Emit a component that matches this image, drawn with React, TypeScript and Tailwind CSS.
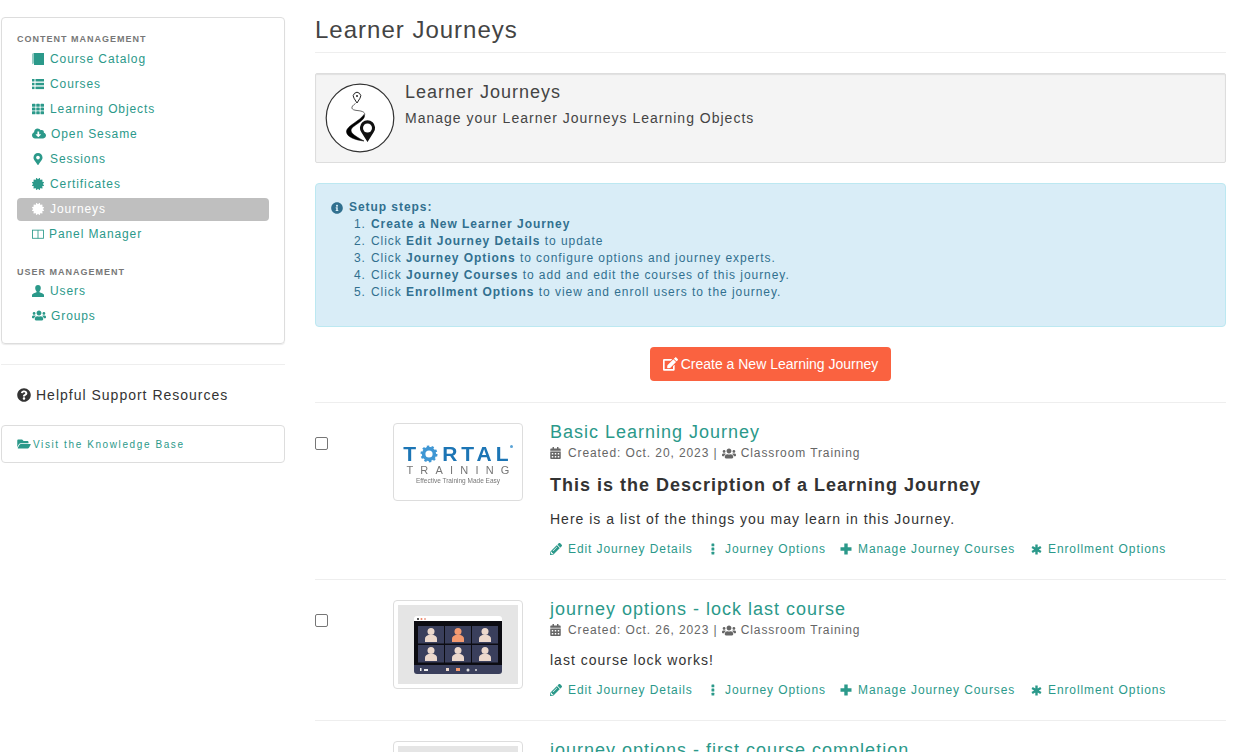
import React from "react";
import {
  FaTh, FaCloudDownloadAlt, FaMapMarkerAlt, FaCertificate, FaUsers,
  FaQuestionCircle, FaFolderOpen, FaInfoCircle, FaPencilAlt, FaEdit,
  FaCalendarAlt,
} from "react-icons/fa";

const Panel = ({ className = "" }: { className?: string }) => (
  <svg viewBox="0 0 14 12" className={className} fill="none" stroke="currentColor" strokeWidth="1">
    <rect x="0.5" y="1.5" width="13" height="9.5" />
    <path d="M7 1.5V11" />
  </svg>
);

const BookIcon = ({ className = "" }: { className?: string }) => (
  <svg viewBox="0 0 12 12" className={className} fill="currentColor">
    <path d="M2 0H12V12H2z" />
    <path d="M0.500 1.500C0.500 .5 1 0 1.500 0v10.500c-.5 0-1 .5-1 1.500z" />
  </svg>
);

const ListIcon = ({ className = "" }: { className?: string }) => (
  <svg viewBox="0 0 12 12" className={className} fill="currentColor">
    <rect x="0" y="1" width="2.500" height="2.500" />
    <rect x="3.500" y="1" width="8.500" height="2.500" />
    <rect x="0" y="4.800" width="2.500" height="2.500" />
    <rect x="3.500" y="4.800" width="8.500" height="2.500" />
    <rect x="0" y="8.600" width="2.500" height="2.500" />
    <rect x="3.500" y="8.600" width="8.500" height="2.500" />
  </svg>
);

const UserIcon = ({ className = "" }: { className?: string }) => (
  <svg viewBox="0 0 12 12" className={className} fill="currentColor">
    <path d="M6 0c1.800 0 2.800 1.200 2.800 3 0 1.500-.7 2.600-1.300 3.200v1c1.500.6 4 1.200 4.500 2.600V12H0V9.800c.5-1.400 3-2 4.500-2.600v-1C3.900 5.600 3.200 4.500 3.200 3 3.200 1.200 4.200 0 6 0z" />
  </svg>
);

const PlusIcon = ({ className = "" }: { className?: string }) => (
  <svg viewBox="0 0 12 12" className={className} fill="currentColor">
    <path d="M4.300.5h3.400v3.800h3.800v3.400H7.700v3.800H4.300V7.700H.5V4.300h3.800z" />
  </svg>
);

const StarIcon = ({ className = "" }: { className?: string }) => (
  <svg viewBox="0 0 12 12" className={className} fill="none" stroke="currentColor" strokeWidth="2.600">
    <path d="M6 .5v11M1.200 3.200l9.600 5.600M10.800 3.200L1.200 8.800" />
  </svg>
);

const DotsIcon = ({ className = "" }: { className?: string }) => (
  <svg viewBox="0 0 12 12" className={className} fill="currentColor">
    <rect x="4.500" y="0.500" width="2.800" height="2.800" rx="0.500" />
    <rect x="4.500" y="4.600" width="2.800" height="2.800" rx="0.500" />
    <rect x="4.500" y="8.700" width="2.800" height="2.800" rx="0.500" />
  </svg>
);

type Item = { icon: React.ReactNode; label: string; gap: string; active?: boolean };

const nav1: Item[] = [
  { icon: <BookIcon className="w-[12px] h-[12px]" />, label: "Course Catalog", gap: "w-[18px]" },
  { icon: <ListIcon className="w-[12px] h-[12px]" />, label: "Courses", gap: "w-[18px]" },
  { icon: <FaTh className="w-[12px] h-[12px]" />, label: "Learning Objects", gap: "w-[18px]" },
  { icon: <FaCloudDownloadAlt className="w-[14px] h-[13px]" />, label: "Open Sesame", gap: "w-[19px]" },
  { icon: <FaMapMarkerAlt className="w-[12px] h-[12px]" />, label: "Sessions", gap: "w-[18px]" },
  { icon: <FaCertificate className="w-[12px] h-[12px]" />, label: "Certificates", gap: "w-[18px]" },
  { icon: <FaCertificate className="w-[12px] h-[12px]" />, label: "Journeys", gap: "w-[18px]", active: true },
  { icon: <Panel className="w-[12px] h-[12px]" />, label: "Panel Manager", gap: "w-[17px]" },
];
const nav2: Item[] = [
  { icon: <UserIcon className="w-[12px] h-[12px]" />, label: "Users", gap: "w-[18px]" },
  { icon: <FaUsers className="w-[14px] h-[13px]" />, label: "Groups", gap: "w-[19px]" },
];

const NavItem = ({ item }: { item: Item }) => (
  <div
    className={`mr-[15px] h-[23px] mb-[2px] pb-[2px] flex items-center pl-[15px] rounded-[4px] text-[12px] tracking-[0.9px] ${
      item.active ? "bg-[#bfbfbf] text-white" : "text-[#2b998a]"
    }`}
  >
    <span className={`${item.gap} shrink-0 flex items-center`}>{item.icon}</span>
    {item.label}
  </div>
);

const Actions = ({ mt }: { mt: string }) => (
  <div className={`flex items-center h-[18px] ${mt} text-[12px] tracking-[0.9px] text-[#2b998a]`}>
    <span className="flex items-center w-[157px]">
      <FaPencilAlt className="w-[12px] h-[12px] mr-[6px]" />
      Edit Journey Details
    </span>
    <span className="flex items-center w-[133px]">
      <DotsIcon className="w-[12px] h-[12px] mr-[6px]" />
      Journey Options
    </span>
    <span className="flex items-center w-[191px]">
      <PlusIcon className="w-[12px] h-[12px] mr-[6px]" />
      Manage Journey Courses
    </span>
    <span className="flex items-center">
      <StarIcon className="w-[11px] h-[11px] mr-[6px]" />
      Enrollment Options
    </span>
  </div>
);

const Meta = ({ date }: { date: string }) => (
  <div className="flex items-center h-[18px] mt-[2px] text-[12px] tracking-[0.9px] text-[#666]">
    <FaCalendarAlt className="w-[11px] h-[12px] mr-[7px]" />
    Created: {date} |&nbsp;
    <FaUsers className="w-[14px] h-[13px] mr-[5px]" />
    Classroom Training
  </div>
);

const Person = ({ x, y, c }: { x: number; y: number; c: string }) => (
  <g transform={`translate(${x} ${y})`}>
    <circle cx="9" cy="3.500" r="3.500" fill={c} />
    <path d="M3 14v-3.500c0-2 2-3 3.500-3.500h5c1.500.5 3.500 1.500 3.500 3.500V14z" fill={c} />
  </g>
);

const Tortal = () => (
  <div className="w-full h-full flex flex-col items-center pt-[18px] blur-[0.3px]">
    <div className="relative flex items-center h-[15px] text-[21px] leading-none font-bold tracking-[4px] text-[#1c75b5]">
      <span>T</span>
      <svg viewBox="0 0 20 20" className="w-[18px] h-[18px] mr-[4px]">
        <circle cx="10" cy="10" r="6" fill="none" stroke="#3f97d4" strokeWidth="4" />
        <circle cx="10" cy="10" r="8.200" fill="none" stroke="#3f97d4" strokeWidth="2.500" strokeDasharray="2.600 2.550" />
      </svg>
      <span>RTAL</span>
      <span className="absolute right-[0px] top-[-1px] w-[3px] h-[3px] rounded-full bg-[#5aa3d6]" />
    </div>
    <div className="text-[11px] leading-[12px] mt-[3px] tracking-[7.200px] text-[#777] pl-[7px]">TRAINING</div>
    <div className="text-[6.500px] leading-[8px] mt-[1px] text-[#777] whitespace-nowrap">Effective Training Made Easy</div>
  </div>
);

const Meeting = () => (
  <div className="w-full h-full bg-[#e5e5e5] flex items-center justify-center blur-[0.3px]">
    <svg viewBox="0 0 88 58" className="w-[88px] h-[58px]">
      <path d="M3 0h82a3 3 0 0 1 3 3v3H0V3a3 3 0 0 1 3-3z" fill="#fff" />
      <circle cx="4" cy="3" r="1" fill="#222" />
      <circle cx="7.500" cy="3" r="1" fill="#f08060" />
      <circle cx="11" cy="3" r="1" fill="#e8a090" />
      <rect y="5" width="88" height="45" fill="#0c0c12" />
      {[4, 31, 58].map((x) =>
        [10, 29].map((y) => <rect key={`${x}-${y}`} x={x} y={y} width="26" height="17.500" fill="#3a3f5c" />),
      )}
      <Person x={8} y={12} c="#ecd8cc" />
      <Person x={35} y={12} c="#f49a70" />
      <Person x={62} y={12} c="#ecd8cc" />
      <Person x={8} y={31} c="#ecd8cc" />
      <Person x={35} y={31} c="#ecd8cc" />
      <Person x={62} y={31} c="#ecd8cc" />
      <path d="M0 49h88v6a3 3 0 0 1-3 3H3a3 3 0 0 1-3-3z" fill="#3a3f5c" />
      <rect x="6" y="52" width="1.500" height="3" fill="#eee" />
      <rect x="10" y="53" width="4" height="2" fill="#eee" />
      <rect x="32" y="52" width="3" height="3" fill="#ecd8cc" />
      <rect x="42" y="52" width="4" height="3" fill="#f49a70" />
      <circle cx="54" cy="54" r="1.500" fill="#ddd" />
      <circle cx="62" cy="54" r="1" fill="#ddd" />
    </svg>
  </div>
);

const JourneyIcon = () => (
  <svg viewBox="0 0 70 70" className="w-[70px] h-[70px] shrink-0">
    <circle cx="35" cy="35" r="33.800" fill="#fff" stroke="#333" strokeWidth="1.200" />
    <path d="M32 20l-3-4.800a3.700 3.700 0 1 1 6 0z" fill="#fff" stroke="#222" strokeWidth="1" />
    <circle cx="32" cy="13" r="1" fill="#222" />
    <path d="M30.500 20.500C25 24 26 27 32 27.500c6 .5 8.500 2 7.500 5" fill="none" stroke="#444" strokeWidth="0.800" />
    <path d="M39 31.500C42 36 31 41 27 45c-3 4 1 7 12 13-9-1-17-4-17.500-9C21 43 35 38 39 31.500z" fill="#000" stroke="#000" strokeWidth="0.500" />
    <path d="M42.500 59l-6-9.500a7.600 7.600 0 1 1 12 0z" fill="#111" />
    <circle cx="42.500" cy="45" r="4.500" fill="#fff" />
  </svg>
);

const Row = ({
  thumb, thumbH, title, children,
}: {
  thumb: React.ReactNode; thumbH: string; title: string; children?: React.ReactNode;
}) => (
  <div className="flex border-t border-[#eee] pt-[20px] pb-[21px]">
    <div className="w-[78px] shrink-0 pt-[14px]">
      <span className="block w-[13px] h-[13px] rounded-[2px] border border-[#767676] bg-white" />
    </div>
    <div className={`w-[130px] ${thumbH} shrink-0 border border-[#ddd] rounded-[4px] p-[4px] bg-white overflow-hidden`}>{thumb}</div>
    <div className="ml-[27px] min-w-0 -mt-[1px]">
      <div className="text-[18px] leading-[20px] tracking-[1px] text-[#2b998a]">{title}</div>
      {children}
    </div>
  </div>
);

export default function App() {
  return (
    <div
      className="flex h-screen overflow-hidden bg-white text-[#333]"
      style={{ fontFamily: '"Liberation Sans", Arial, sans-serif' }}
    >
      <aside className="w-[284px] ml-[1px] shrink-0 pt-[17px]">
        <div className="h-[327px] border border-[#ddd] rounded-[4px] shadow-[0_1px_1px_rgba(0,0,0,0.08)] pt-[15px] pl-[15px]">
          <div className="h-[14px] flex items-center text-[9px] font-bold tracking-[1px] text-[#777] mb-[1px]">CONTENT MANAGEMENT</div>
          {nav1.map((n) => <NavItem key={n.label} item={n} />)}
          <div className="h-[14px] flex items-center text-[9px] font-bold tracking-[1px] text-[#777] mt-[20px]">USER MANAGEMENT</div>
          {nav2.map((n) => <NavItem key={n.label} item={n} />)}
        </div>
        <div className="border-t border-[#eee] mt-[20px]" />
        <div className="mt-[20px] h-[20px] flex items-center pl-[16px] text-[14px] tracking-[1px] text-[#333]">
          <FaQuestionCircle className="w-[14px] h-[14px] mr-[5px]" />
          Helpful Support Resources
        </div>
        <div className="mt-[20px] h-[38px] border border-[#ddd] rounded-[4px] flex items-center pl-[15px] text-[10px] tracking-[1.600px] text-[#2b998a]">
          <FaFolderOpen className="w-[14px] h-[12px] mr-[2px]" />
          Visit the Knowledge Base
        </div>
      </aside>

      <main className="ml-[30px] w-[911px] shrink-0 pt-[15px]">
        <div className="h-[38px] border-b border-[#eee] text-[24px] leading-[30px] tracking-[1px] font-normal text-[#444]">Learner Journeys</div>

        <div className="mt-[20px] h-[90px] flex border border-[#ddd] rounded-[2px] bg-[#f4f4f4] shadow-[inset_0_1px_1px_rgba(0,0,0,0.08)] pt-[9px] pl-[9px]">
          <JourneyIcon />
          <div className="ml-[10px] -mt-[1px]">
            <div className="text-[18px] leading-[20px] tracking-[1px] text-[#444]">Learner Journeys</div>
            <div className="mt-[6px] text-[14px] leading-[20px] tracking-[1px] text-[#444]">Manage your Learner Journeys Learning Objects</div>
          </div>
        </div>

        <div className="mt-[20px] h-[144px] border border-[#bce8f1] rounded-[4px] bg-[#d9edf7] text-[#31708f] text-[12px] leading-[17px] tracking-[0.95px] pt-[15px] pl-[15px]">
          <div className="flex items-center font-bold">
            <FaInfoCircle className="w-[12px] h-[12px] mr-[6px]" />
            Setup steps:
          </div>
          <ol className="pl-[23px]">
            <li className="flex"><span className="w-[17px]">1.</span><b>Create a New Learner Journey</b></li>
            <li className="flex"><span className="w-[17px]">2.</span><span>Click <b>Edit Journey Details</b> to update</span></li>
            <li className="flex"><span className="w-[17px]">3.</span><span>Click <b>Journey Options</b> to configure options and journey experts.</span></li>
            <li className="flex"><span className="w-[17px]">4.</span><span>Click <b>Journey Courses</b> to add and edit the courses of this journey.</span></li>
            <li className="flex"><span className="w-[17px]">5.</span><span>Click <b>Enrollment Options</b> to view and enroll users to the journey.</span></li>
          </ol>
        </div>

        <div className="mt-[20px] flex justify-center pb-[21px]">
          <div className="h-[34px] w-[241px] rounded-[4px] bg-[#fa6240] text-white text-[14px] flex items-center justify-center">
            <FaEdit className="w-[15px] h-[14px] mr-[3px]" />
            Create a New Learning Journey
          </div>
        </div>

        <Row thumb={<Tortal />} thumbH="h-[78px]" title="Basic Learning Journey">
          <Meta date="Oct. 20, 2023" />
          <div className="mt-[13px] text-[18px] leading-[20px] font-bold tracking-[1px] text-[#333]">This is the Description of a Learning Journey</div>
          <div className="mt-[12px] h-[24px] flex items-center text-[14px] tracking-[1px] text-[#333]">Here is a list of the things you may learn in this Journey.</div>
          <Actions mt="mt-[9px]" />
        </Row>
        <Row thumb={<Meeting />} thumbH="h-[89px]" title="journey options - lock last course">
          <Meta date="Oct. 26, 2023" />
          <div className="mt-[11px] h-[20px] flex items-center text-[14px] tracking-[1px] text-[#333]">last course lock works!</div>
          <Actions mt="mt-[11px]" />
        </Row>
        <Row thumb={<div className="w-full h-full bg-[#e5e5e5]" />} thumbH="h-[89px]" title="journey options - first course completion" />
      </main>
    </div>
  );
}
